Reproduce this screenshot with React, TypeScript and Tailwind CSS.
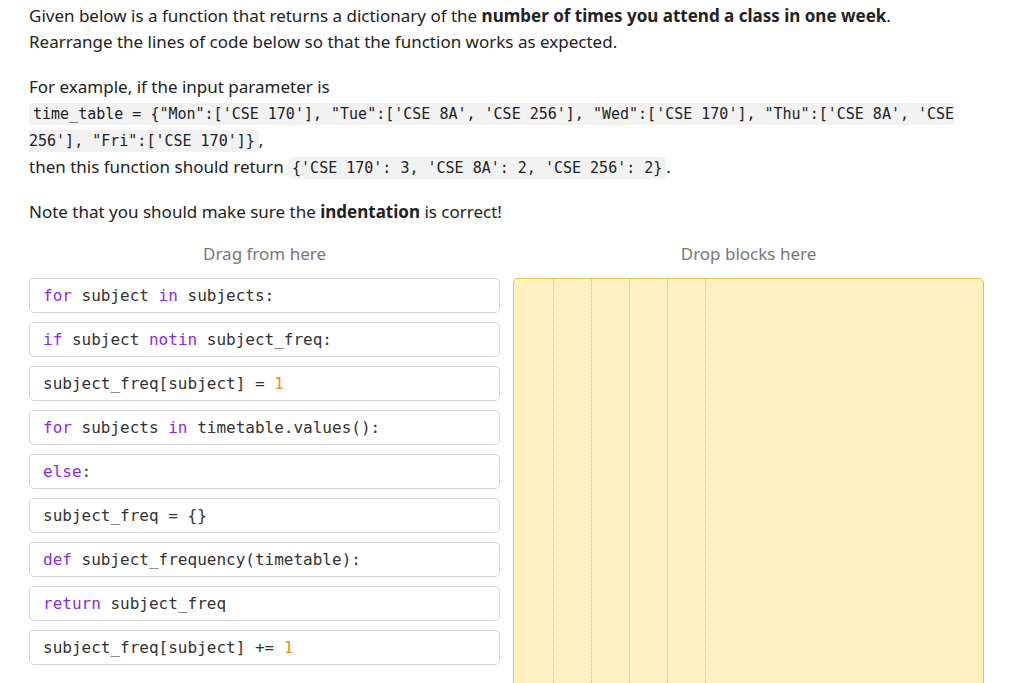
import React from 'react';

const kw = 'text-[#8a2be2]';
const num = 'text-[#f08c1a]';

const blocks: React.ReactNode[] = [
  <><span className={kw}>for</span>{' subject '}<span className={kw}>in</span>{' subjects:'}</>,
  <><span className={kw}>if</span>{' subject '}<span className={kw}>not</span>{' '}<span className={kw}>in</span>{' subject_freq:'}</>,
  <>{'subject_freq[subject] = '}<span className={num}>1</span></>,
  <><span className={kw}>for</span>{' subjects '}<span className={kw}>in</span>{' timetable.values():'}</>,
  <><span className={kw}>else</span>:</>,
  <>{'subject_freq = {}'}</>,
  <><span className={kw}>def</span>{' subject_frequency(timetable):'}</>,
  <><span className={kw}>return</span>{' subject_freq'}</>,
  <>{'subject_freq[subject] += '}<span className={num}>1</span></>,
];

const Code: React.FC<{ children: React.ReactNode }> = ({ children }) => (
  <code className="font-[DejaVu_Sans_Mono] text-[15px] bg-[#f2f2f2] px-[4px] py-[2px] rounded">{children}</code>
);

export default function App() {
  return (
    <div className="w-[1024px] h-[683px] overflow-hidden bg-white font-['Open_Sans',sans-serif] text-[17px] text-[#222] leading-[26px] pl-[29px] pt-[3px]">
      <p>
        Given below is a function that returns a dictionary of the <b>number of times you attend a class in one week</b>.
        <br />
        Rearrange the lines of code below so that the function works as expected.
      </p>
      <p className="mt-[19px] w-[955px]">
        For example, if the input parameter is
        <br />
        <Code>time_table = {'{'}"Mon":['CSE 170'], "Tue":['CSE 8A', 'CSE 256'], "Wed":['CSE 170'], "Thu":['CSE 8A', 'CSE 256'], "Fri":['CSE 170']{'}'}</Code>,
        <br />
        then this function should return <Code>{"{'CSE 170': 3, 'CSE 8A': 2, 'CSE 256': 2}"}</Code>.
      </p>
      <p className="mt-[18px]">
        Note that you should make sure the <b>indentation</b> is correct!
      </p>
      <div className="flex gap-[13px] mt-[16px]">
        <div className="w-[471px]">
          <div className="text-center text-[#777] mb-[11px]">Drag from here</div>
          <div className="flex flex-col gap-[9px]">
            {blocks.map((b, i) => (
              <div key={i} className="h-[35px] border border-[#d4d4d4] rounded-[5px] px-[13px] flex items-center font-[DejaVu_Sans_Mono] text-[16px] text-[#333] whitespace-pre">
                {b}
              </div>
            ))}
          </div>
        </div>
        <div className="w-[471px]">
          <div className="text-center text-[#777] mb-[11px]">Drop blocks here</div>
          <div className="h-[420px] bg-[#fff2c0] border border-[#e8c63a] rounded-[5px] flex">
            <div className="w-[39px]" />
            {[0, 1, 2, 3].map((i) => (
              <div key={i} className="w-[38px] border-l border-dotted border-[#e8c63a]" />
            ))}
            <div className="flex-1 border-l border-dotted border-[#e8c63a]" />
          </div>
        </div>
      </div>
    </div>
  );
}
